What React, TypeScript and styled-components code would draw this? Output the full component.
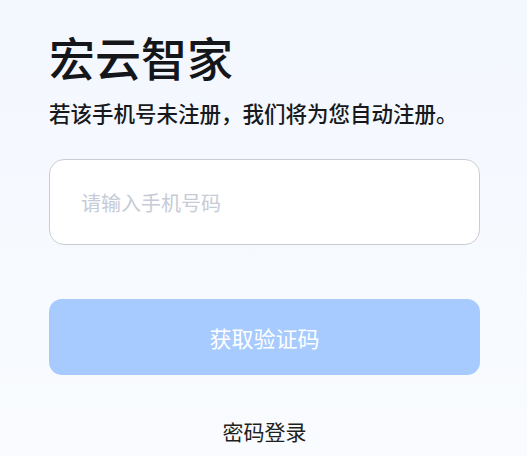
import React from "react";
import styled, { createGlobalStyle } from "styled-components";

const GlobalStyle = createGlobalStyle`
  html, body {
    margin: 0;
    padding: 0;
    background: #f4f7fe;
  }
  body {
    font-family: "Noto Sans CJK SC", "Noto Sans", sans-serif;
  }
`;

const Page = styled.div`
  min-height: 456px;
  box-sizing: border-box;
  padding: 26px 47px 0 49px;
  background: linear-gradient(180deg, #f3f7fe 0%, #f9fbfe 100%);
  display: flex;
  flex-direction: column;
`;

const Title = styled.h1`
  margin: 0;
  font-size: 46px;
  line-height: 60px;
  font-weight: 500;
  color: #14161a;
`;

const Subtitle = styled.p`
  margin: 12px 0 0;
  font-size: 21.5px;
  line-height: 30px;
  font-weight: 500;
  color: #17191c;
`;

const PhoneInput = styled.input`
  margin-top: 31px;
  height: 86px;
  box-sizing: border-box;
  border: 1px solid #c9ccd2;
  border-radius: 15px;
  background: #ffffff;
  padding: 0 31px;
  font-family: inherit;
  font-size: 20px;
  color: #222;
  outline: none;

  &::placeholder {
    color: #c6cbd6;
  }
`;

const SubmitButton = styled.button`
  margin-top: 54px;
  height: 76px;
  border: none;
  border-radius: 13px;
  background: #a7cbfe;
  color: #ffffff;
  font-family: inherit;
  font-size: 22px;
  cursor: pointer;
`;

const SwitchLink = styled.button`
  margin-top: 41px;
  align-self: center;
  border: none;
  background: transparent;
  padding: 0;
  font-family: inherit;
  font-size: 21px;
  line-height: 30px;
  color: #1e1f22;
  cursor: pointer;
`;

const App = () => {
  const [phone, setPhone] = React.useState<string>("");

  return (
    <>
      <GlobalStyle />
      <Page>
        <Title>宏云智家</Title>
        <Subtitle>若该手机号未注册，我们将为您自动注册。</Subtitle>
        <PhoneInput
          value={phone}
          placeholder="请输入手机号码"
          onChange={(e) => setPhone(e.target.value)}
        />
        <SubmitButton disabled={phone.length < 11}>获取验证码</SubmitButton>
        <SwitchLink>密码登录</SwitchLink>
      </Page>
    </>
  );
};

export default App;
